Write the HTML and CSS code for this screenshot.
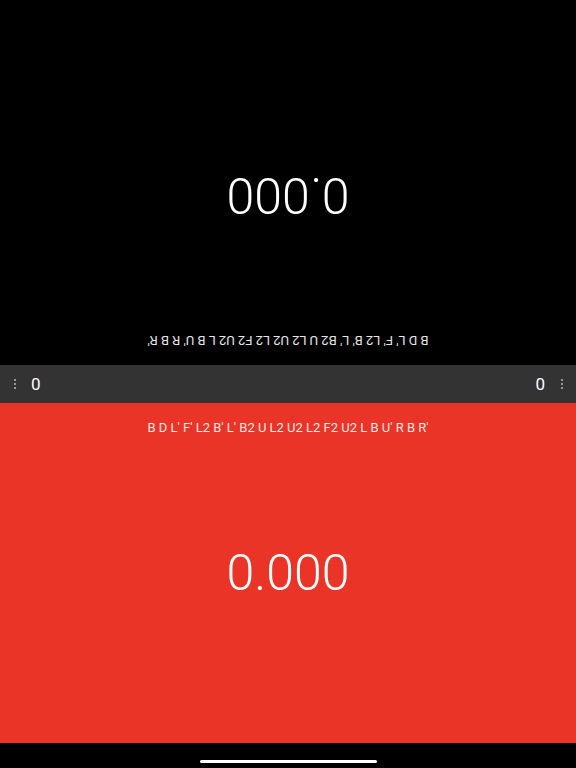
FILE: index.html
```html
<!DOCTYPE html>
<html>
<head>
<meta charset="utf-8">
<link rel="stylesheet" href="styles.css">
</head>
<body>
<div class="app">
  <section class="panel panel-top">
    <div class="pane flipped">
      <div class="scramble">B D L' F' L2 B' L' B2 U L2 U2 L2 F2 U2 L B U' R B R'</div>
      <div class="time">0.000</div>
    </div>
  </section>
  <div class="bar">
    <div class="side">
      <span class="dots"><i></i><i></i><i></i></span>
      <span class="count">0</span>
    </div>
    <div class="side">
      <span class="count">0</span>
      <span class="dots"><i></i><i></i><i></i></span>
    </div>
  </div>
  <section class="panel panel-bottom">
    <div class="pane">
      <div class="scramble">B D L' F' L2 B' L' B2 U L2 U2 L2 F2 U2 L B U' R B R'</div>
      <div class="time">0.000</div>
    </div>
  </section>
  <div class="home"><span class="indicator"></span></div>
</div>
</body>
</html>
```
FILE: styles.css
```css
* { box-sizing: border-box; }
html, body { margin: 0; padding: 0; background: #000; }
body { font-family: Roboto, "Liberation Sans", sans-serif; color: #fff; }
.app { width: 576px; height: 768px; display: flex; flex-direction: column; }
.panel { display: flex; flex-direction: column; justify-content: flex-end; }
.panel-top { height: 365px; background: #000; }
.panel-bottom { height: 340px; background: #e93427; }
.pane { height: 340px; display: flex; flex-direction: column; align-items: center; padding-top: 17px; }
.flipped { transform: rotate(180deg); }
.scramble { font-size: 13px; line-height: 16px; letter-spacing: 0; color: #fff; }
.panel-bottom .scramble { color: #fde8e6; }
.panel-top .scramble { color: #e6e6e6; }
.time { font-size: 50px; font-weight: 300; line-height: 56px; margin-top: 109px; }
.bar { height: 38px; background: #333333; display: flex; justify-content: space-between; align-items: center; padding: 0 13px; }
.side { display: flex; align-items: center; gap: 15px; }
.count { font-size: 17px; line-height: 20px; }
.dots { display: flex; flex-direction: column; gap: 2px; width: 3px; align-items: center; }
.dots i { display: block; width: 2px; height: 2px; border-radius: 1px; background: #bbb; }
.home { height: 25px; background: #000; display: flex; justify-content: center; align-items: flex-start; padding-top: 17px; }
.indicator { width: 177px; height: 3px; border-radius: 2px; background: #fff; }
```
